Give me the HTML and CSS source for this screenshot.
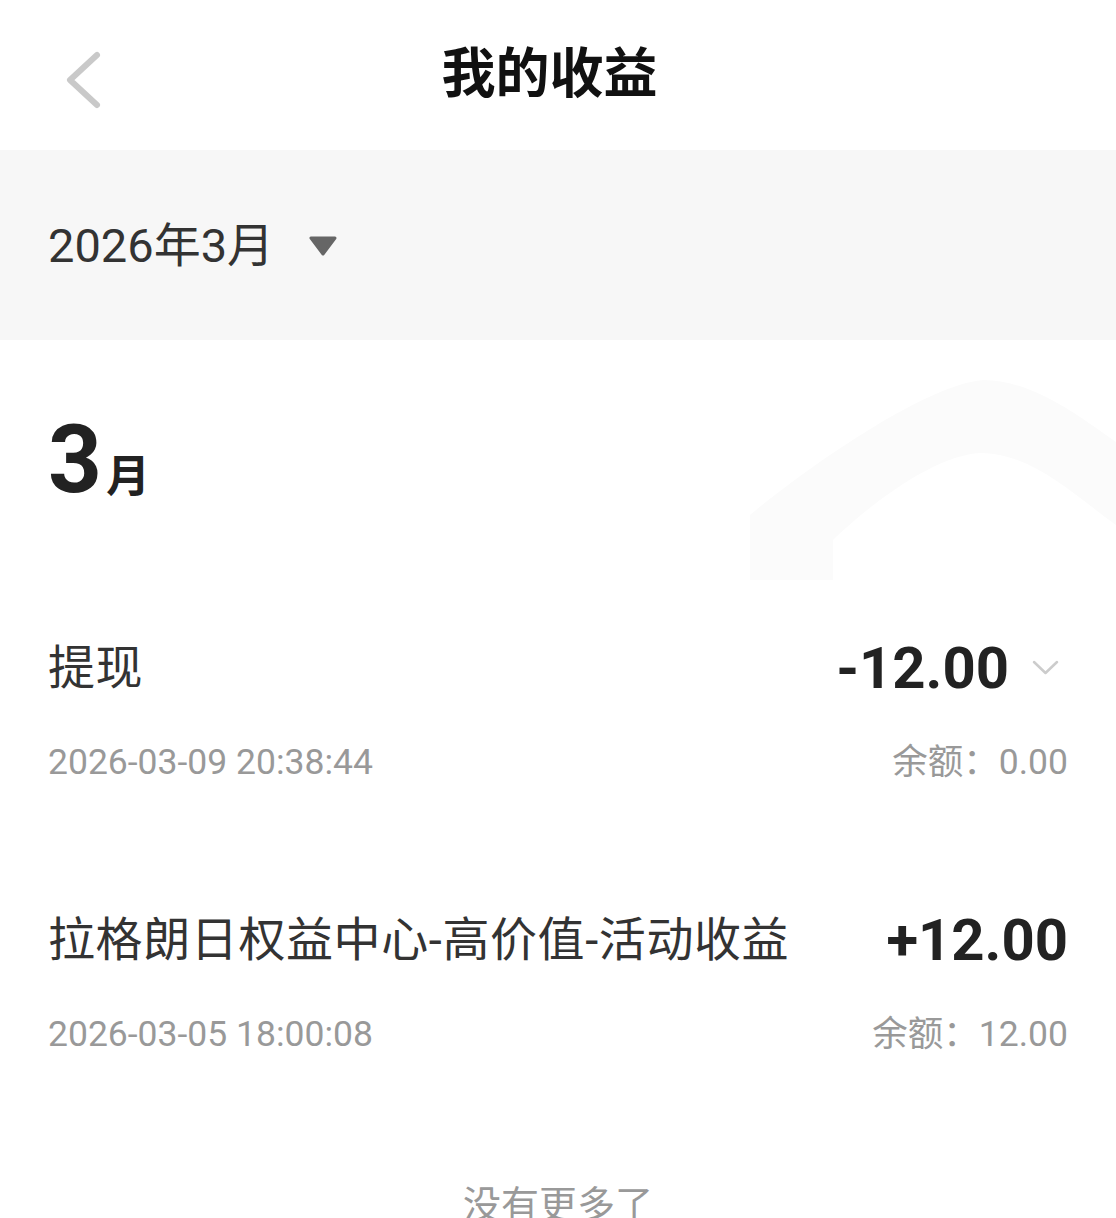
FILE: index.html
```html
<!DOCTYPE html>
<html lang="zh-CN">
<head>
    <meta charset="UTF-8">
    <meta name="viewport" content="width=device-width, initial-scale=1.0">
    <title>我的收益</title>
    <link rel="stylesheet" href="styles.css">
</head>
<body>
    <header class="topbar">
        <a class="back" href="#" aria-label="返回">
            <svg width="44" height="60" viewBox="0 0 44 60">
                <polyline points="35,5 8,30 35,55" fill="none" stroke="#c9c9c9" stroke-width="6" stroke-linecap="round" stroke-linejoin="round"/>
            </svg>
        </a>
        <h1 class="title">我的收益</h1>
        <span></span>
    </header>

    <div class="filter">
        <span class="filter-date">2026年3月</span>
        <svg class="caret" width="30" height="22" viewBox="0 0 30 22">
            <path d="M3,3 L27,3 L15,19 Z" fill="#666" stroke="#666" stroke-width="3" stroke-linejoin="round"/>
        </svg>
    </div>

    <section class="month">
        <!-- faint background decoration -->
        <svg class="watermark" width="372" height="200" viewBox="0 0 372 200">
            <path d="M6,200 L6,135 C60,90 180,5 239,0 C290,0 340,40 372,62 L372,145 C330,115 290,75 239,73 C190,73 120,130 89,160 L89,200 Z" fill="#fbfbfb"/>
        </svg>

        <h2 class="month-title"><span class="month-num">3</span><span class="month-unit">月</span></h2>

        <ul class="records">
            <li class="record">
                <div class="record-main">
                    <span class="record-name">提现</span>
                    <span class="record-right">
                        <span class="record-amount">-12.00</span>
                        <svg class="expand" width="45" height="20" viewBox="0 0 45 20">
                            <polyline points="11,4 22.5,15 34,4" fill="none" stroke="#cccccc" stroke-width="2.5" stroke-linecap="round" stroke-linejoin="round"/>
                        </svg>
                    </span>
                </div>
                <div class="record-meta">
                    <span>2026-03-09 20:38:44</span>
                    <span>余额：0.00</span>
                </div>
            </li>
            <li class="record">
                <div class="record-main">
                    <span class="record-name">拉格朗日权益中心-高价值-活动收益</span>
                    <span class="record-right">
                        <span class="record-amount">+12.00</span>
                    </span>
                </div>
                <div class="record-meta">
                    <span>2026-03-05 18:00:08</span>
                    <span>余额：12.00</span>
                </div>
            </li>
        </ul>

        <p class="no-more">没有更多了</p>
    </section>
</body>
</html>
```

FILE: styles.css
```css
body {
    margin: 0;
    font-family: Roboto, "Noto Sans CJK SC", sans-serif;
    color: #333;
    background: #fff;
}
.topbar {
    height: 150px;
    display: grid;
    grid-template-columns: 1fr auto 1fr;
    align-items: center;
}
.back {
    display: block;
    width: 44px;
    height: 60px;
    margin-left: 62px;
    margin-top: 10px;
}
.back svg {
    display: block;
}
.title {
    margin: 0;
    padding-right: 17px;
    font-size: 54px;
    font-weight: 700;
    line-height: 60px;
    color: #111;
}
.filter {
    height: 190px;
    padding: 0 48px;
    display: flex;
    align-items: center;
    background: #f7f7f7;
}
.filter-date {
    font-size: 47px;
    line-height: 1;
    color: #333;
}
.caret {
    margin-left: 34px;
    margin-top: 2px;
}
.month {
    position: relative;
    padding-top: 73px;
}
.watermark {
    position: absolute;
    top: 40px;
    right: 0;
}
.month-title {
    position: relative;
    margin: 0;
    padding-left: 48px;
    font-size: 94px;
    font-weight: 700;
    line-height: 94px;
    color: #222;
}
.month-unit {
    font-size: 44px;
    line-height: 1;
    margin-left: 4px;
}
.records {
    position: relative;
    list-style: none;
    margin: 67px 0 0;
    padding: 0;
}
.record {
    padding: 64px 48px;
}
.record-main {
    height: 60px;
    display: flex;
    justify-content: space-between;
    align-items: center;
}
.record-name {
    font-size: 47px;
    letter-spacing: 0.6px;
    line-height: 60px;
    color: #333;
}
.record-right {
    display: flex;
    align-items: center;
}
.record-amount {
    font-size: 58px;
    font-weight: 700;
    line-height: 60px;
    color: #222;
}
.expand {
    margin-left: 14px;
}
.record-meta {
    margin-top: 44px;
    height: 40px;
    display: flex;
    justify-content: space-between;
    font-size: 35.5px;
    line-height: 40px;
    color: #999;
}
.no-more {
    position: relative;
    margin: 67px 0 0;
    text-align: center;
    font-size: 38px;
    line-height: 40px;
    color: #999;
}
```
